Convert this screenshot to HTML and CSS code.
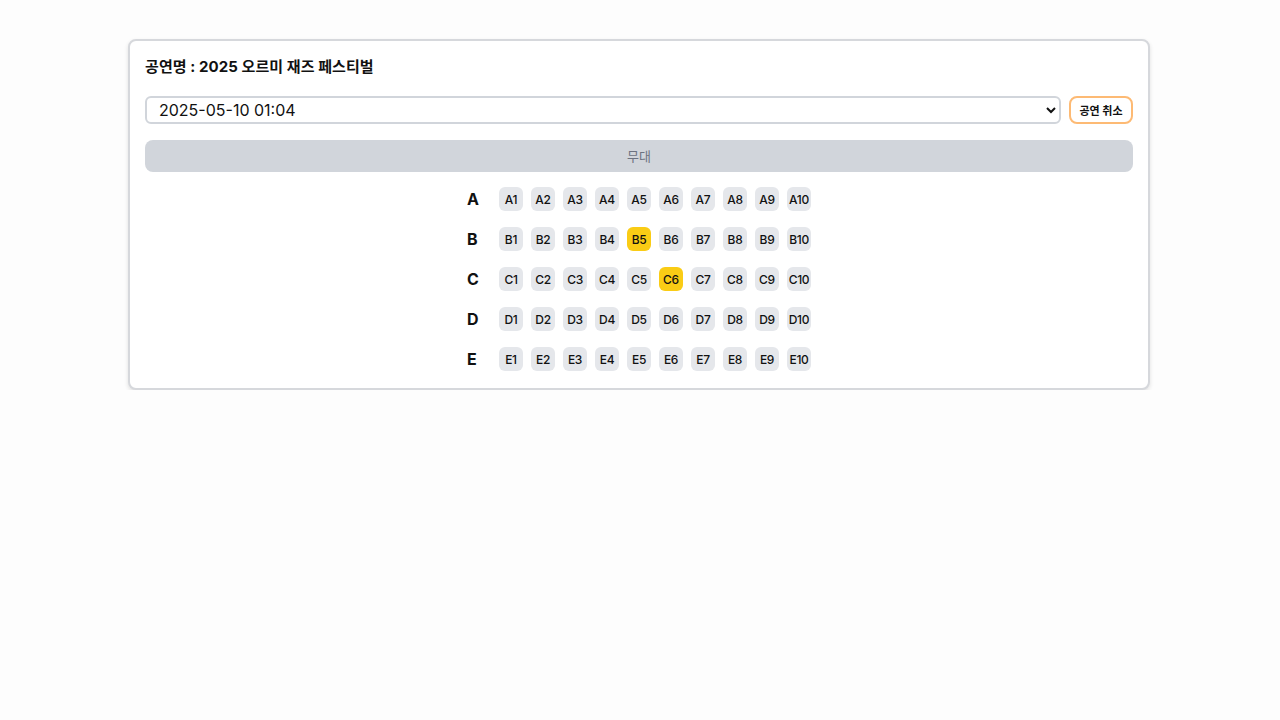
FILE: index.html
```html
<!DOCTYPE html>
<html lang="ko">
<head>
<meta charset="utf-8">
<title>공연 좌석</title>
<link rel="stylesheet" href="styles.css">
</head>
<body>
<div class="page">
  <div class="card">
    <h1 class="title">공연명 : 2025 오르미 재즈 페스티벌</h1>
    <div class="controls">
      <select class="date-select">
        <option>2025-05-10 01:04</option>
      </select>
      <button class="cancel-btn">공연 취소</button>
    </div>
    <div class="stage">무대</div>
    <div class="seat-map">
      <div class="seat-row"><span class="row-label">A</span><div class="seats"><button class="seat">A1</button><button class="seat">A2</button><button class="seat">A3</button><button class="seat">A4</button><button class="seat">A5</button><button class="seat">A6</button><button class="seat">A7</button><button class="seat">A8</button><button class="seat">A9</button><button class="seat">A10</button></div></div>
      <div class="seat-row"><span class="row-label">B</span><div class="seats"><button class="seat">B1</button><button class="seat">B2</button><button class="seat">B3</button><button class="seat">B4</button><button class="seat selected">B5</button><button class="seat">B6</button><button class="seat">B7</button><button class="seat">B8</button><button class="seat">B9</button><button class="seat">B10</button></div></div>
      <div class="seat-row"><span class="row-label">C</span><div class="seats"><button class="seat">C1</button><button class="seat">C2</button><button class="seat">C3</button><button class="seat">C4</button><button class="seat">C5</button><button class="seat selected">C6</button><button class="seat">C7</button><button class="seat">C8</button><button class="seat">C9</button><button class="seat">C10</button></div></div>
      <div class="seat-row"><span class="row-label">D</span><div class="seats"><button class="seat">D1</button><button class="seat">D2</button><button class="seat">D3</button><button class="seat">D4</button><button class="seat">D5</button><button class="seat">D6</button><button class="seat">D7</button><button class="seat">D8</button><button class="seat">D9</button><button class="seat">D10</button></div></div>
      <div class="seat-row"><span class="row-label">E</span><div class="seats"><button class="seat">E1</button><button class="seat">E2</button><button class="seat">E3</button><button class="seat">E4</button><button class="seat">E5</button><button class="seat">E6</button><button class="seat">E7</button><button class="seat">E8</button><button class="seat">E9</button><button class="seat">E10</button></div></div>
    </div>
  </div>
</div>
</body>
</html>
```

FILE: styles.css
```css
* { box-sizing: border-box; }
html, body {
  margin: 0;
  padding: 0;
  background: #fdfdfd;
  font-family: Inter, "Noto Sans CJK KR", sans-serif;
  color: #111827;
}
.page {
  padding: 39px 0 0 128px;
}
.card {
  width: 1022px;
  border: 2px solid #d6d8dc;
  border-radius: 8px;
  background: #fff;
  padding: 15px 15px 17px;
  box-shadow: 0 2px 4px rgba(0, 0, 0, 0.12);
}
.title {
  margin: 0;
  font-size: 15px;
  line-height: 22px;
  font-weight: 700;
  letter-spacing: 0.08px;
  color: #111;
}
.controls {
  display: flex;
  gap: 8px;
  margin-top: 18px;
}
.date-select {
  flex: 1;
  height: 28px;
  border: 2px solid #d1d5db;
  border-radius: 6px;
  background: #fff;
  font-family: Inter, "Noto Sans CJK KR", sans-serif;
  font-size: 16px;
  color: #111;
  padding: 0 8px 0 8px;
}
.cancel-btn {
  width: 64px;
  height: 28px;
  border: 2px solid #fdba74;
  border-radius: 8px;
  background: #fff;
  font-family: Inter, "Noto Sans CJK KR", sans-serif;
  font-size: 11px;
  font-weight: 700;
  color: #111;
  padding: 0;
}
.stage {
  margin-top: 16px;
  height: 32px;
  padding-bottom: 2px;
  border-radius: 8px;
  background: #d1d5db;
  color: #6b7280;
  font-size: 13px;
  display: flex;
  align-items: center;
  justify-content: center;
}
.seat-map {
  margin-top: 15px;
  display: flex;
  flex-direction: column;
  gap: 16px;
}
.seat-row {
  display: flex;
  justify-content: center;
  align-items: center;
}
.row-label {
  width: 32px;
  font-size: 16px;
  font-weight: 700;
  color: #111;
}
.seats {
  display: flex;
  gap: 8px;
}
.seat {
  width: 24px;
  height: 24px;
  border: none;
  border-radius: 6px;
  background: #e5e7eb;
  font-family: Inter, "Noto Sans CJK KR", sans-serif;
  font-size: 12px;
  font-weight: 500;
  color: #111;
  padding: 0;
  display: flex;
  align-items: center;
  justify-content: center;
  letter-spacing: -0.3px;
}
.seat.selected {
  background: #facc15;
}
```
